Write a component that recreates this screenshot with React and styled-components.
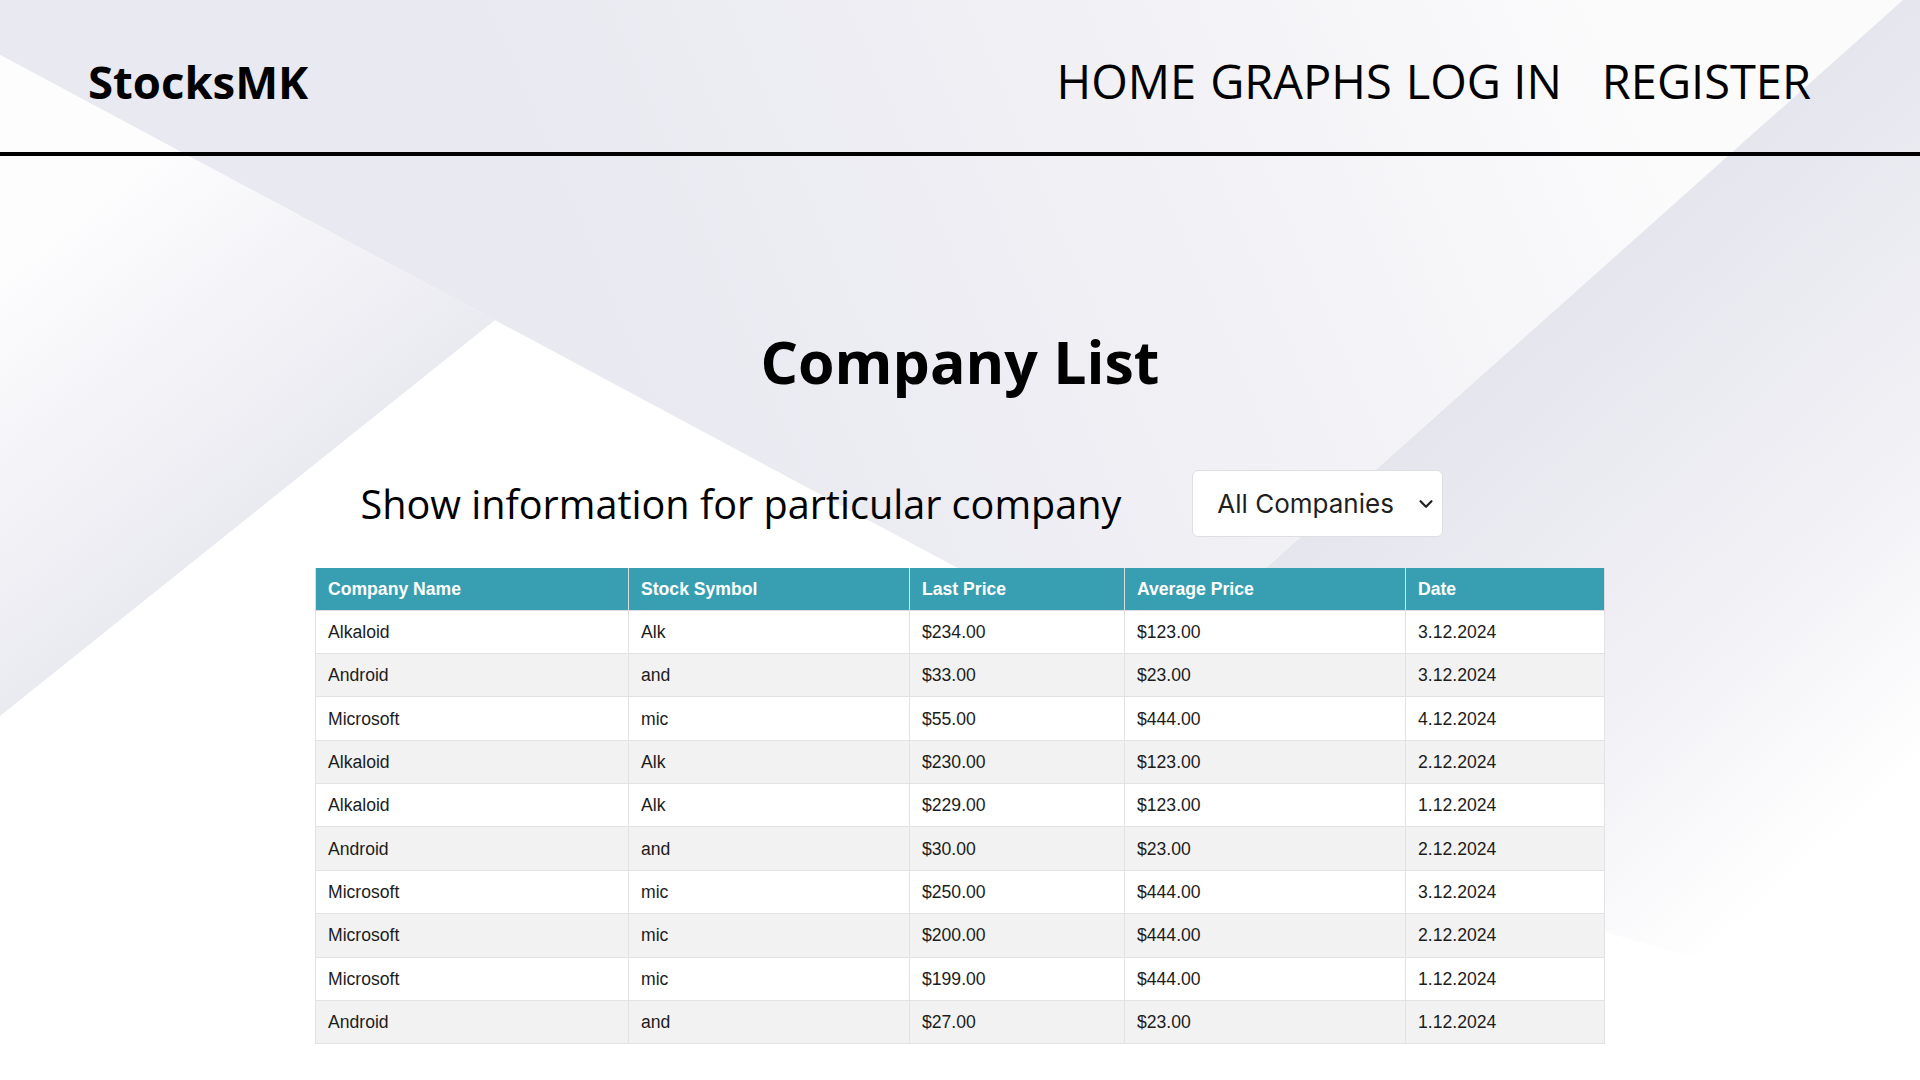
import React from "react";
import styled, { createGlobalStyle } from "styled-components";
import { ChevronDown } from "lucide-react";

const GlobalStyle = createGlobalStyle`
  html, body {
    margin: 0;
    padding: 0;
    background: #ffffff;
  }
  * {
    box-sizing: border-box;
  }
`;

// page: backdrop and content share the same grid cell
const Page = styled.div`
  display: grid;
  min-height: 100vh;
  overflow: hidden;
`;

const Backdrop = styled.svg`
  grid-area: 1 / 1;
  display: block;
  width: 100%;
  height: 100vh;
`;

const Content = styled.div`
  grid-area: 1 / 1;
  z-index: 1;
  display: flex;
  flex-direction: column;
`;

const Header = styled.header`
  display: flex;
  align-items: center;
  justify-content: space-between;
  height: 156px;
  padding: 9px 109px 0 88px;
  border-bottom: 4px solid #000;
`;

const Logo = styled.div`
  font-family: "Open Sans", "Noto Sans", sans-serif;
  font-weight: 700;
  font-size: 45.5px;
  color: #000;
`;

const Nav = styled.nav`
  display: flex;
  align-items: center;
  gap: 14px;
`;

const NavLink = styled.a`
  font-family: "Open Sans", "Noto Sans", sans-serif;
  font-size: 47px;
  font-weight: 400;
  color: #000;
  text-decoration: none;
  margin-left: ${(p) => (p.$wide ? "26px" : "0")};
`;

const Main = styled.main`
  display: flex;
  flex-direction: column;
  align-items: center;
`;

const Title = styled.h1`
  margin: 176px 0 0;
  font-family: "Open Sans", "Noto Sans", sans-serif;
  font-weight: 700;
  font-size: 59px;
  line-height: 1;
  color: #000;
`;

const Controls = styled.div`
  display: flex;
  align-items: center;
  gap: 71px;
  width: 1289px;
  margin-top: 79px;
  padding-left: 45px;
`;

const Label = styled.span`
  font-family: "Open Sans", "Noto Sans", sans-serif;
  font-size: 39.6px;
  color: #000;
`;

const SelectBox = styled.div`
  display: flex;
  align-items: center;
  justify-content: space-between;
  width: 251px;
  height: 67px;
  padding: 0 5px 0 24px;
  background: #fff;
  border: 1px solid #dedee3;
  border-radius: 6px;
  font-family: "Inter", "Liberation Sans", sans-serif;
  font-size: 26px;
  color: #1f1f1f;
  cursor: pointer;
`;

const Table = styled.table`
  margin-top: 31px;
  width: 1289px;
  border-collapse: collapse;
  table-layout: fixed;
  font-family: "Liberation Sans", Arial, sans-serif;
  font-size: 17.6px;
  line-height: 20px;
`;

const Th = styled.th`
  width: ${(p) => p.$w}px;
  padding: 10.8px 12px;
  background: #389fb2;
  color: #fff;
  font-weight: 700;
  text-align: left;
  border: 1px solid #dcdcdc;
  border-top: none;
`;

const Tr = styled.tr`
  background: ${(p) => (p.$alt ? "#f2f2f2" : "#ffffff")};
`;

const Td = styled.td`
  padding: 11.2px 12px;
  color: #1c1c1c;
  border: 1px solid #e2e2e2;
  white-space: nowrap;
`;

const columns = [
  { label: "Company Name", w: 313 },
  { label: "Stock Symbol", w: 281 },
  { label: "Last Price", w: 215 },
  { label: "Average Price", w: 281 },
  { label: "Date", w: 199 },
];

const rows = [
  ["Alkaloid", "Alk", "$234.00", "$123.00", "3.12.2024"],
  ["Android", "and", "$33.00", "$23.00", "3.12.2024"],
  ["Microsoft", "mic", "$55.00", "$444.00", "4.12.2024"],
  ["Alkaloid", "Alk", "$230.00", "$123.00", "2.12.2024"],
  ["Alkaloid", "Alk", "$229.00", "$123.00", "1.12.2024"],
  ["Android", "and", "$30.00", "$23.00", "2.12.2024"],
  ["Microsoft", "mic", "$250.00", "$444.00", "3.12.2024"],
  ["Microsoft", "mic", "$200.00", "$444.00", "2.12.2024"],
  ["Microsoft", "mic", "$199.00", "$444.00", "1.12.2024"],
  ["Android", "and", "$27.00", "$23.00", "1.12.2024"],
];

// soft geometric background drawing
const Shapes = () => (
  <Backdrop viewBox="0 0 1920 1080" preserveAspectRatio="none" aria-hidden="true">
    <defs>
      <linearGradient id="topBand" gradientUnits="userSpaceOnUse" x1="1650" y1="120" x2="700" y2="520">
        <stop offset="0" stopColor="#fbfbfc" />
        <stop offset="0.5" stopColor="#f0f0f5" />
        <stop offset="1" stopColor="#e9e9f1" />
      </linearGradient>
      <linearGradient id="fold" gradientUnits="userSpaceOnUse" x1="60" y1="220" x2="300" y2="520">
        <stop offset="0" stopColor="#fdfdfe" />
        <stop offset="1" stopColor="#e8e8f0" />
      </linearGradient>
      <linearGradient id="rightWing" gradientUnits="userSpaceOnUse" x1="1420" y1="420" x2="1820" y2="860">
        <stop offset="0" stopColor="#e5e5ee" />
        <stop offset="0.55" stopColor="#f0f0f5" />
        <stop offset="1" stopColor="#ffffff" />
      </linearGradient>
    </defs>
    <rect x="0" y="0" width="1920" height="1080" fill="#ffffff" />
    <polygon points="0,0 1903,0 1150,671 0,55" fill="url(#topBand)" />
    <polygon points="0,55 495,320 0,716" fill="url(#fold)" />
    <polygon points="1903,0 1920,0 1920,880 1717,964 1039,770" fill="url(#rightWing)" />
  </Backdrop>
);

export default function App() {
  return (
    <>
      <GlobalStyle />
      <Page>
        <Shapes />
        <Content>
          <Header>
            <Logo>StocksMK</Logo>
            <Nav>
              <NavLink href="#">HOME</NavLink>
              <NavLink href="#">GRAPHS</NavLink>
              <NavLink href="#">LOG IN</NavLink>
              <NavLink href="#" $wide>REGISTER</NavLink>
            </Nav>
          </Header>
          <Main>
            <Title>Company List</Title>
            <Controls>
              <Label>Show information for particular company</Label>
              <SelectBox>
                <span>All Companies</span>
                <ChevronDown size={22} strokeWidth={2.4} />
              </SelectBox>
            </Controls>
            <Table>
              <thead>
                <tr>
                  {columns.map((c) => (
                    <Th key={c.label} $w={c.w}>{c.label}</Th>
                  ))}
                </tr>
              </thead>
              <tbody>
                {rows.map((r, i) => (
                  <Tr key={i} $alt={i % 2 === 1}>
                    {r.map((cell, j) => (
                      <Td key={j}>{cell}</Td>
                    ))}
                  </Tr>
                ))}
              </tbody>
            </Table>
          </Main>
        </Content>
      </Page>
    </>
  );
}
